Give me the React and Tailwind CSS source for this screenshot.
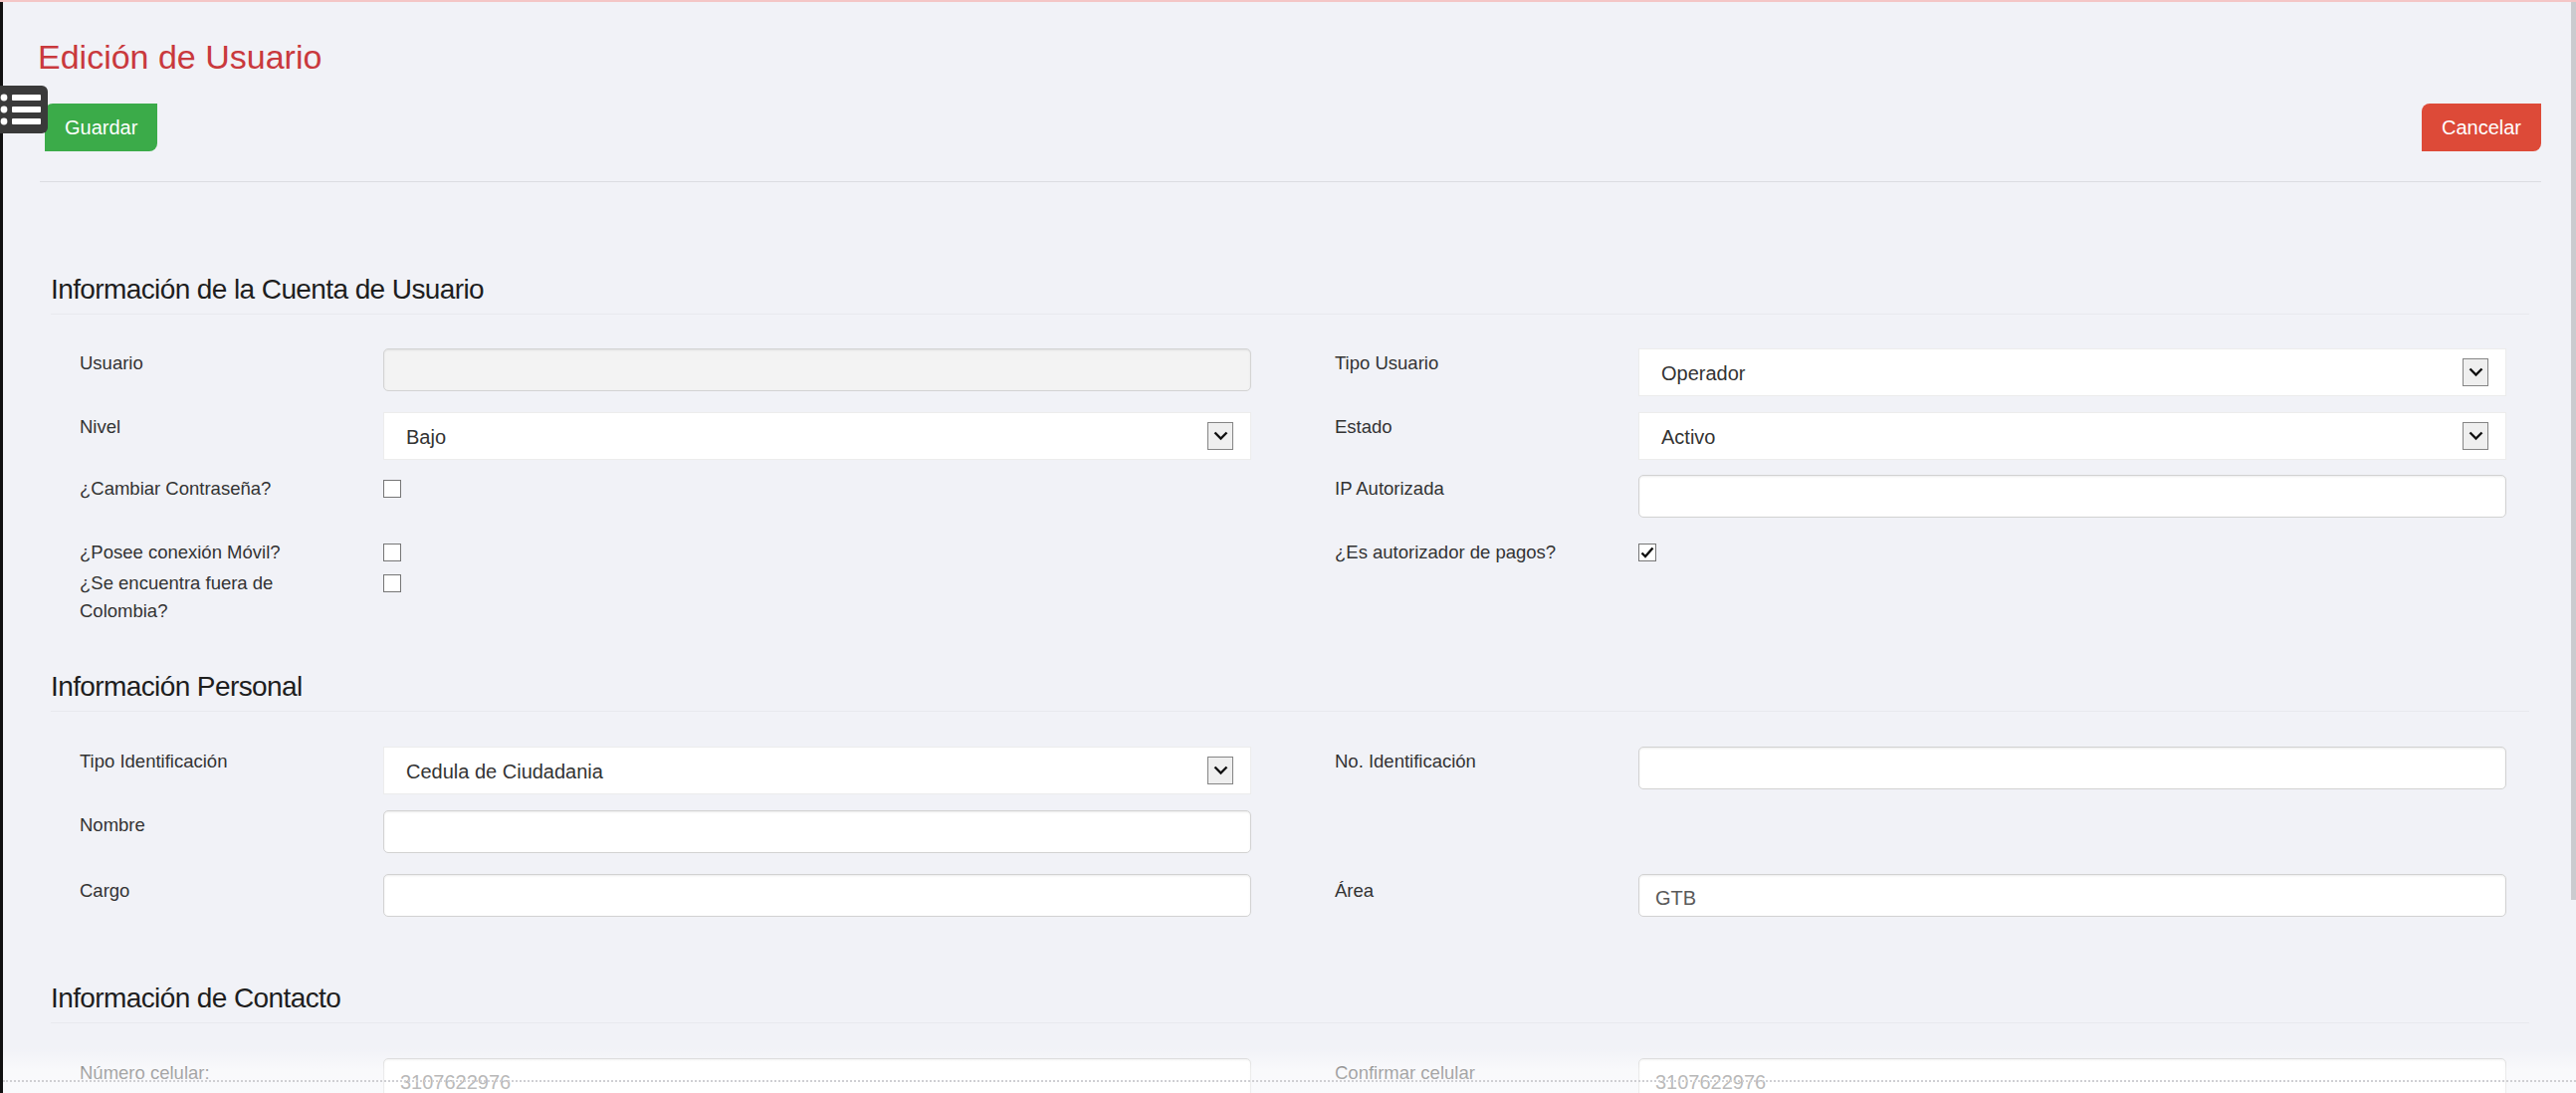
import React from 'react';

function Label({ children, className = '' }) {
    return (
        <div className={`w-[305px] shrink-0 pr-[45px] text-[18.5px] leading-[28px] text-[#333] ${className}`}>
            {children}
        </div>
    );
}

function TextInput({ value = '', disabled = false }) {
    return (
        <input
            readOnly
            value={value}
            className={`block h-[43px] w-full rounded-[5px] border px-[16px] pt-[5px] text-[20px] text-[#5a5a5a] outline-none shadow-[inset_0_1px_2px_rgba(0,0,0,0.08)] ${disabled ? 'border-[#d3d3d3] bg-[#f3f3f3]' : 'border-[#d2d2d2] bg-white'}`}
        />
    );
}

function Select({ value }) {
    return (
        <div className="flex h-[48px] w-full items-center justify-between border border-[#ececec] bg-white pl-[22px] pr-[17px] text-[20px] text-[#333]">
            <span className="pt-[2px]">{value}</span>
            <span className="flex h-[28px] w-[26px] items-center justify-center border border-[#858585] bg-[#efefef]">
                <svg width="15" height="10" viewBox="0 0 15 10">
                    <path d="M1.5 1.5 7.5 7.5l6-6" fill="none" stroke="#111" strokeWidth="2.4" />
                </svg>
            </span>
        </div>
    );
}

function Checkbox({ checked = false }) {
    return (
        <span className="mt-[5px] flex h-[18px] w-[18px] items-center justify-center border border-[#767676] bg-white">
            {checked && (
                <svg width="14" height="12" viewBox="0 0 14 12">
                    <path d="M1.5 6.5 5 10l7.5-8.5" fill="none" stroke="#111" strokeWidth="2.4" />
                </svg>
            )}
        </span>
    );
}

function Field({ label, labelClass = 'pt-[1px]', children }) {
    return (
        <div className="flex items-start">
            <Label className={labelClass}>{label}</Label>
            <div className="w-[872px]">{children}</div>
        </div>
    );
}

function Row({ className = '', children }) {
    return <div className={`grid grid-cols-[1177px_1177px] gap-x-[84px] ${className}`}>{children}</div>;
}

function SectionTitle({ className = '', children }) {
    return (
        <h2 className={`border-b border-[#e8e9ee] pb-[6px] text-[28px] leading-[36px] tracking-[-0.6px] text-[#1e1e1e] ${className}`}>
            {children}
        </h2>
    );
}

export default function App() {
    return (
        <div className="relative h-[1098px] overflow-hidden border-t-2 border-[#f4c6c6] bg-[#f1f2f7] font-['Liberation_Sans',Arial,Helvetica,sans-serif]">
            {/* window edge */}
            <div className="absolute left-0 top-0 bottom-0 w-[3px] bg-[#111]" />

            {/* menu toggle */}
            <div className="absolute left-0 top-[84px] z-10 flex h-[48px] w-[48px] items-center rounded-r-[6px] bg-[#3a3a3a]">
                <svg width="44" height="48" viewBox="0 0 44 48">
                    <circle cx="4" cy="12" r="3.4" fill="#fff" />
                    <circle cx="4" cy="24" r="3.4" fill="#fff" />
                    <circle cx="4" cy="36" r="3.4" fill="#fff" />
                    <rect x="12" y="9" width="29" height="6" rx="1" fill="#fff" />
                    <rect x="12" y="21" width="29" height="6" rx="1" fill="#fff" />
                    <rect x="12" y="33" width="29" height="6" rx="1" fill="#fff" />
                </svg>
            </div>

            {/* scrollbar */}
            <div className="absolute right-0 top-0 h-[902px] w-[5px] bg-[#cbcbcf]" />

            <div className="pl-[38px] pr-[35px] pt-[36px]">
                <h1 className="text-[34px] leading-[38px] text-[#c9393d]">Edición de Usuario</h1>

                <div className="mt-[28px] flex justify-between">
                    <button className="ml-[7px] h-[48px] rounded-tl-[8px] rounded-br-[8px] bg-[#3bab49] px-[20px] text-[20px] text-white">
                        Guardar
                    </button>
                    <button className="h-[48px] rounded-tl-[8px] rounded-br-[8px] bg-[#dd4a38] px-[20px] text-[20px] text-white">
                        Cancelar
                    </button>
                </div>

                <div className="ml-[2px] mt-[30px] border-t border-[#dcdde2]" />

                <div className="ml-[13px] mr-[12px]">
                    {/* Cuenta de usuario */}
                    <SectionTitle className="mt-[90px]">Información de la Cuenta de Usuario</SectionTitle>
                    <div className="mt-[34px] pl-[29px]">
                        <Row className="h-[64px]">
                            <Field label="Usuario"><TextInput disabled /></Field>
                            <Field label="Tipo Usuario"><Select value="Operador" /></Field>
                        </Row>
                        <Row className="h-[63px]">
                            <Field label="Nivel"><Select value="Bajo" /></Field>
                            <Field label="Estado"><Select value="Activo" /></Field>
                        </Row>
                        <Row className="h-[64px]">
                            <Field label="¿Cambiar Contraseña?" labelClass="pt-0"><Checkbox /></Field>
                            <Field label="IP Autorizada" labelClass="pt-0"><TextInput /></Field>
                        </Row>
                        <Row className="h-[31px]">
                            <Field label="¿Posee conexión Móvil?" labelClass="pt-0"><Checkbox /></Field>
                            <Field label="¿Es autorizador de pagos?" labelClass="pt-0"><Checkbox checked /></Field>
                        </Row>
                        <Row className="h-[56px]">
                            <Field label="¿Se encuentra fuera de Colombia?" labelClass="pt-0"><Checkbox /></Field>
                            <div />
                        </Row>
                    </div>

                    {/* Personal */}
                    <SectionTitle className="mt-[44px]">Información Personal</SectionTitle>
                    <div className="mt-[35px] pl-[29px]">
                        <Row className="h-[64px]">
                            <Field label="Tipo Identificación"><Select value="Cedula de Ciudadania" /></Field>
                            <Field label="No. Identificación"><TextInput /></Field>
                        </Row>
                        <Row className="h-[64px]">
                            <Field label="Nombre"><TextInput /></Field>
                            <div />
                        </Row>
                        <Row className="h-[43px]">
                            <Field label="Cargo" labelClass="pt-[3px]"><TextInput /></Field>
                            <Field label="Área" labelClass="pt-[3px]"><TextInput value="GTB" /></Field>
                        </Row>
                    </div>

                    {/* Contacto */}
                    <SectionTitle className="mt-[64px]">Información de Contacto</SectionTitle>
                    <div className="mt-[35px] pl-[29px]">
                        <Row className="h-[64px]">
                            <Field label="Número celular:"><TextInput value="3107622976" /></Field>
                            <Field label="Confirmar celular"><TextInput value="3107622976" /></Field>
                        </Row>
                    </div>
                </div>
            </div>

            {/* faded footer strip */}
            <div className="absolute left-[3px] right-0 top-[1050px] bottom-0 bg-gradient-to-b from-white/0 via-white/55 to-white/60" />
            <div className="absolute left-[3px] right-0 top-[1083px] border-t-2 border-dotted border-[#cfcfd3]" />
        </div>
    );
}
